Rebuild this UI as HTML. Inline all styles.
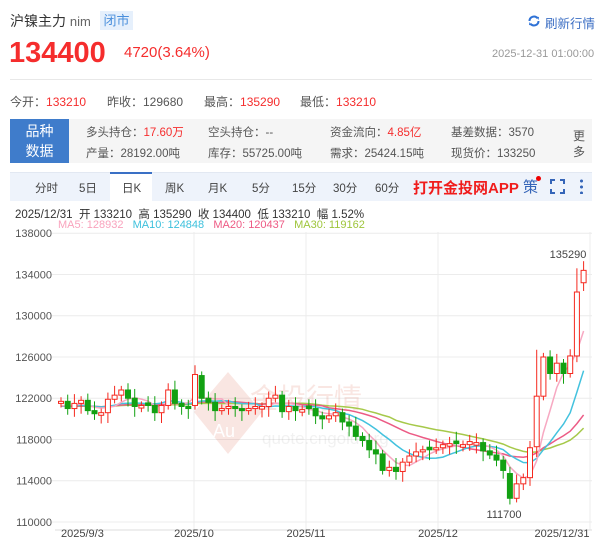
<!DOCTYPE html>
<html><head><meta charset="utf-8">
<style>
*{margin:0;padding:0;box-sizing:border-box}
body{width:600px;height:538px;background:#fff;font-family:"Liberation Sans","Noto Sans CJK SC",sans-serif;position:relative;overflow:hidden;color:#333}
.a{position:absolute;white-space:nowrap}
.red{color:#f52d2d}
</style></head><body>
<div class="a" style="left:10px;top:11px;font-size:14px;color:#333">沪镍主力 <span style="font-size:13px;color:#666">nim</span></div>
<div class="a" style="left:100px;top:11px;width:33px;height:19px;background:#e6f0fc;color:#4a8fdc;font-size:13px;text-align:center;line-height:19px">闭市</div>
<svg class="a" style="left:527px;top:14px" width="14" height="14" viewBox="0 0 14 14"><path d="M2.5 7a4.5 4.5 0 0 1 8-2.8M11.5 7a4.5 4.5 0 0 1-8 2.8" fill="none" stroke="#2f72d6" stroke-width="2"/><path d="M9 2.5l3 .5-.5 3z M5 11.5l-3-.5.5-3z" fill="#2f72d6"/></svg>
<div class="a" style="left:545px;top:13px;font-size:12.5px;color:#3d6fc4">刷新行情</div>
<div class="a red" style="left:9px;top:37px;font-size:29px;font-weight:bold">134400</div>
<div class="a red" style="left:124px;top:44px;font-size:15px">4720(3.64%)</div>
<div class="a" style="left:492px;top:48px;font-size:11px;color:#999">2025-12-31 01:00:00</div>
<div class="a" style="left:10px;top:79px;width:582px;height:1px;background:#e8e8e8"></div>
<div class="a" style="left:10px;top:93px;font-size:12px;color:#555">今开：<span class="red">133210</span></div>
<div class="a" style="left:107px;top:93px;font-size:12px;color:#555">昨收：129680</div>
<div class="a" style="left:204px;top:93px;font-size:12px;color:#555">最高：<span class="red">135290</span></div>
<div class="a" style="left:300px;top:93px;font-size:12px;color:#555">最低：<span class="red">133210</span></div>
<div class="a" style="left:10px;top:119px;width:582px;height:44px;background:#f5f5f5"></div>
<div class="a" style="left:10px;top:119px;width:59px;height:44px;background:#3f7ccb;color:#fff;font-size:14px;text-align:center;line-height:20px;padding-top:2px">品种<br>数据</div>
<div class="a" style="left:86px;top:123px;font-size:11.5px;color:#555;line-height:21px">多头持仓：<span class="red">17.60万</span><br>产量：28192.00吨</div>
<div class="a" style="left:208px;top:123px;font-size:11.5px;color:#555;line-height:21px">空头持仓：--<br>库存：55725.00吨</div>
<div class="a" style="left:330px;top:123px;font-size:11.5px;color:#555;line-height:21px">资金流向：<span class="red">4.85亿</span><br>需求：25424.15吨</div>
<div class="a" style="left:451px;top:123px;font-size:11.5px;color:#555;line-height:21px">基差数据：3570<br>现货价：133250</div>
<div class="a" style="left:573px;top:128px;font-size:12px;color:#555;line-height:16px">更<br>多</div>
<div class="a" style="left:10px;top:172px;width:582px;height:29px;background:#eef3fb;border-top:1px solid #e2e8f2"></div>
<div class="a" style="left:110px;top:172px;width:42px;height:29px;background:#fff;border-top:2px solid #3a70c5"></div>
<div class="a" style="left:0;top:180px;font-size:11.5px;color:#444;width:600px;height:16px">
<span class="a" style="left:35px">分时</span><span class="a" style="left:79px">5日</span><span class="a" style="left:122px">日K</span><span class="a" style="left:165px">周K</span><span class="a" style="left:208px">月K</span><span class="a" style="left:252px">5分</span><span class="a" style="left:292px">15分</span><span class="a" style="left:333px">30分</span><span class="a" style="left:375px">60分</span></div>
<div class="a" style="left:413px;top:177px;font-size:15px;font-weight:bold;color:#f01c1c">打开金投网APP</div>
<div class="a" style="left:523px;top:176px;font-size:15px;color:#3565b8">策</div>
<div class="a" style="left:536px;top:176px;width:5px;height:5px;border-radius:50%;background:#e00"></div>
<svg class="a" style="left:550px;top:179px" width="15" height="15"><path d="M1 5V1h4M10 1h4v4M14 10v4h-4M5 14H1v-4" fill="none" stroke="#3565b8" stroke-width="2"/></svg>
<div class="a" style="left:580px;top:178px;width:3px;height:16px;background:radial-gradient(circle,#3565b8 1.4px,transparent 1.6px) 0 0/3px 6px"></div>
<div class="a" style="left:15px;top:206px;font-size:11.5px;color:#333">2025/12/31&nbsp; 开 133210&nbsp; 高 135290&nbsp; 收 134400&nbsp; 低 133210&nbsp; 幅 1.52%</div>
<div class="a" style="left:58px;top:219px;font-size:11px"><span style="color:#f9a3bd">MA5: 128932</span>&nbsp;&nbsp;&nbsp;<span style="color:#3cc0dc">MA10: 124848</span>&nbsp;&nbsp;&nbsp;<span style="color:#ee5a84">MA20: 120437</span>&nbsp;&nbsp;&nbsp;<span style="color:#9ec53a">MA30: 119162</span></div>
<svg id="c" class="a" style="left:0;top:0" width="600" height="538"></svg>
<script>
var s='',C=[121700,121000,121500,121800,120800,120500,120600,121900,122300,122800,122000,121200,121300,121300,120600,121300,122800,121500,121200,121000,
124300,122000,121600,120800,121000,121200,121000,120800,121000,121200,121200,122000,122300,120700,121200,120800,
120900,121000,120300,120000,120300,120600,119700,119300,118300,117900,117000,116600,115000,115300,114900,115800,116400,116800,117000,117000,
117200,117500,117600,117600,117500,117800,117700,116900,116500,116000,115000,112300,113700,114300,117200,122200,126000,124400,125400,124400,126100,132300,134400];
function Y(p){return 522-(p-110000)*0.010313}
function X(i){return 61+i*6.7}
var g='#ececec';
[138000,134000,130000,126000,122000,118000,114000,110000].forEach(function(p){var y=Y(p);s+='<line x1="52" x2="592" y1="'+y+'" y2="'+y+'" stroke="'+g+'"/><text x="52" y="'+(y+4)+'" text-anchor="end" font-size="11" fill="#555">'+p+'</text>'});
[194,306,438,590].forEach(function(x){s+='<line x1="'+x+'" x2="'+x+'" y1="232" y2="530" stroke="'+g+'"/>'});
s+='<line x1="55" x2="592" y1="530" y2="530" stroke="#ddd"/>';
[[61,'2025/9/3'],[194,'2025/10'],[306,'2025/11'],[438,'2025/12'],[562,'2025/12/31']].forEach(function(d){s+='<text x="'+d[0]+'" y="537" font-size="11" fill="#444" text-anchor="'+(d[0]==61?'start':'middle')+'">'+d[1]+'</text>'});
s+='<g opacity="0.13"><path d="M228 372l34 40-34 42-34-42z" fill="#d9442b"/><text x="213" y="437" font-size="18" fill="#fff">Au</text><text x="250" y="408" font-size="28" fill="#d9442b" font-family="Noto Sans CJK SC">金投行情</text><text x="262" y="444" font-size="17" fill="#999">quote.cngold.org</text></g>';
function ma(n,col){var d='';for(var i=0;i<C.length;i++){var t=0;for(var k=0;k<n;k++){var j=i-k;t+=j>=0?C[j]:121200}d+=(i?'L':'M')+X(i).toFixed(1)+' '+Y(t/n).toFixed(1)}s+='<path d="'+d+'" fill="none" stroke="'+col+'" stroke-width="1.5"/>'}
ma(30,'#a6c94a');ma(20,'#ec5b85');ma(10,'#43c2de');ma(5,'#f7a9c2');
var O={20:121300,67:114700,71:117300,77:126100,78:133200,21:124200,74:124400};
for(var i=0;i<C.length;i++){var o=O[i]!==undefined?O[i]:(i?C[i-1]:121500),c=C[i];if(Math.abs(o-c)<150)o=c+(i%2?250:-250);
var up=c>=o,hi=Math.max(o,c)+400+(i%3)*250,lo=Math.min(o,c)-400-(i%4)*200;if(i==78)hi=135290;if(i==67)lo=111700;if(i==71)hi=126700;if(i==77)hi=134600;
var col=up?'#f5281e':'#12a112',x=X(i);
s+='<line x1="'+x+'" x2="'+x+'" y1="'+Y(hi)+'" y2="'+Y(lo)+'" stroke="'+col+'"/>';
var t=Y(Math.max(o,c)),h=Math.max(1.5,Y(Math.min(o,c))-t);
s+='<rect x="'+(x-2.5)+'" y="'+t+'" width="5" height="'+h+'" fill="'+(up?'#fff':col)+'" stroke="'+col+'"/>'}
s+='<text x="568" y="258" font-size="11" fill="#444" text-anchor="middle">135290</text><text x="504" y="518" font-size="11" fill="#444" text-anchor="middle">111700</text>';
document.getElementById('c').innerHTML=s;
</script>
</body></html>
